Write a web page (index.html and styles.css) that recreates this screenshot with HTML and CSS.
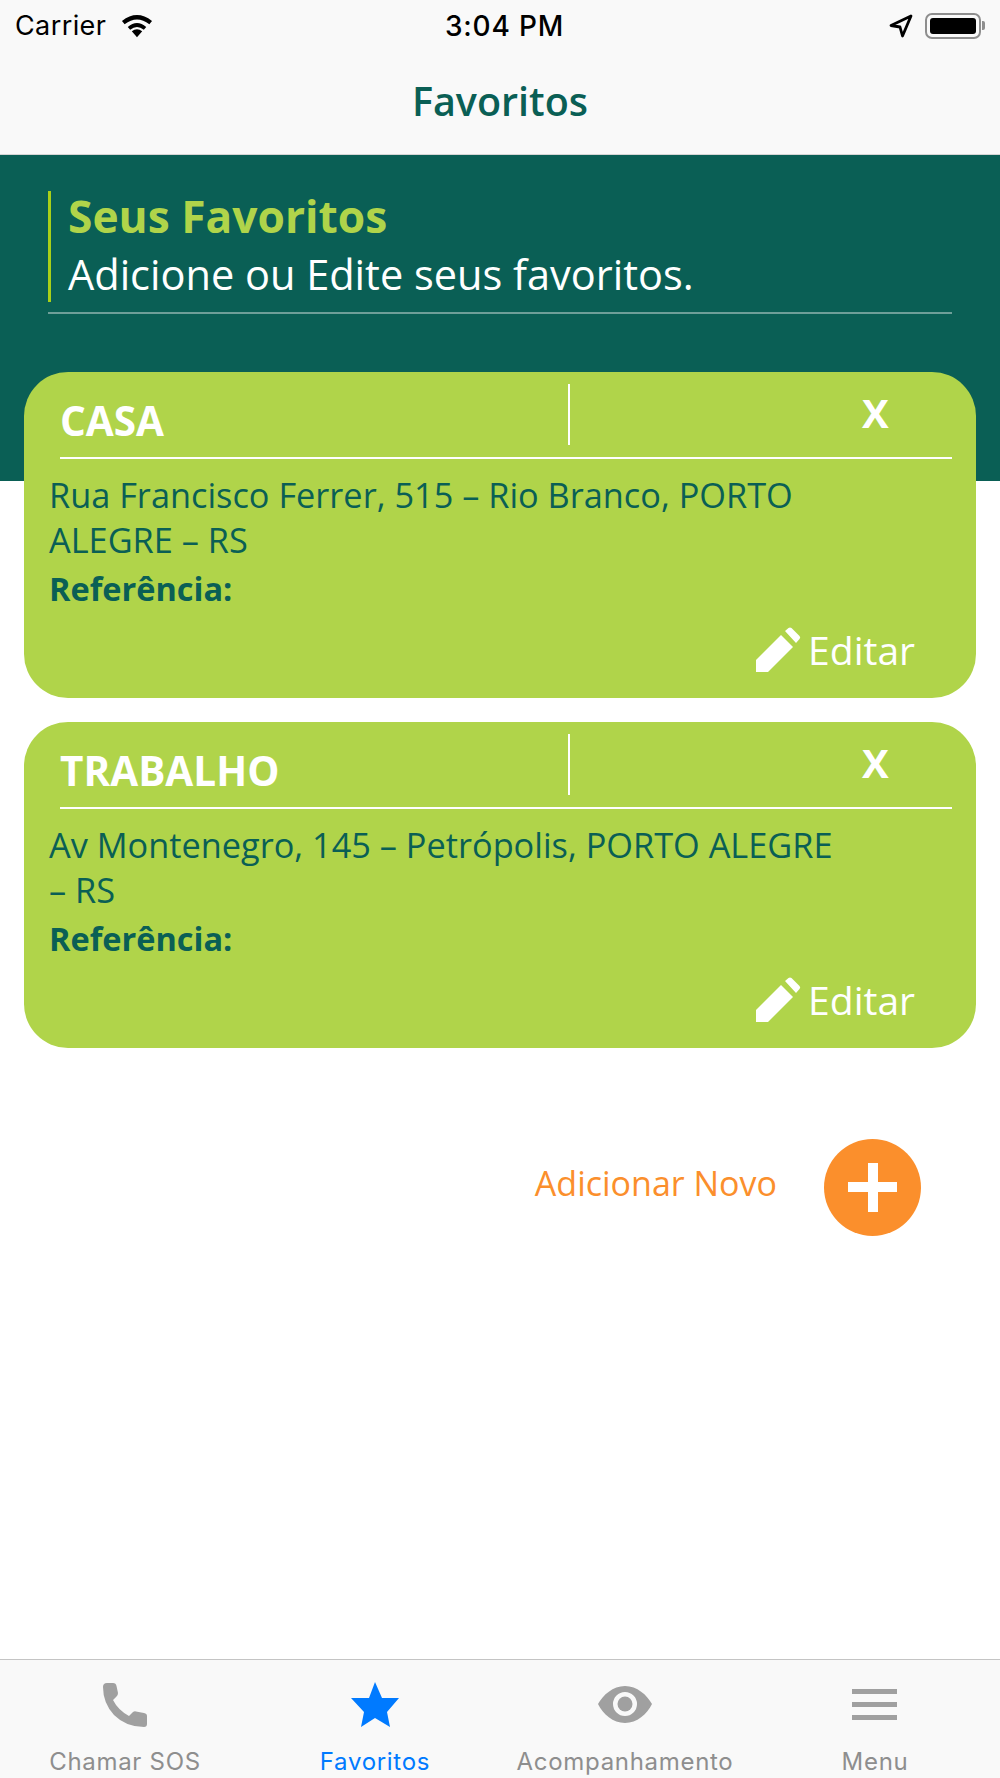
FILE: index.html
```html
<!DOCTYPE html>
<html lang="en">
<head>
  <meta charset="UTF-8" />
  <meta name="viewport" content="width=device-width, initial-scale=1" />
  <title>Favoritos</title>
  <link rel="stylesheet" href="styles.css">
</head>
<body>
  <div class="page">

    <!-- Status bar -->
    <div class="status-bar">
      <div class="status-left">
        <span>Carrier</span>
        <svg class="wifi" width="34" height="26" viewBox="0 0 36 26">
          <path d="M18 25 L12.5 18.5 Q18 14.5 23.5 18.5 Z" fill="#000"/>
          <path d="M9.5 15.5 Q18 8.5 26.500 15.5" fill="none" stroke="#000" stroke-width="4"/>
          <path d="M3.500 9.500 Q18 -2 32.500 9.500" fill="none" stroke="#000" stroke-width="4.500"/>
        </svg>
      </div>
      <div class="status-time">3:04 PM</div>
      <div class="status-right">
        <svg width="24" height="24" viewBox="0 0 24 24">
          <path d="M22 2 L2 11.500 L11 13 L13.500 22 Z" fill="none" stroke="#000" stroke-width="2.800" stroke-linejoin="round"/>
        </svg>
        <div class="battery"><div class="battery-fill"></div></div>
        <div class="battery-tip"></div>
      </div>
    </div>

    <!-- Navigation -->
    <nav class="nav-bar">Favoritos</nav>

    <!-- Header -->
    <section class="hero">
      <div class="hero-inner">
        <div class="hero-text">
          <h1>Seus Favoritos</h1>
          <p>Adicione ou Edite seus favoritos.</p>
        </div>
      </div>
    </section>

    <!-- Cards -->
    <section class="card-list">
      <div class="card">
        <div class="card-head">
          <h2>CASA</h2>
          <div class="card-close"><span>X</span></div>
        </div>
        <p class="card-address">Rua Francisco Ferrer, 515 – Rio Branco, PORTO<br>ALEGRE – RS</p>
        <p class="card-ref">Referência:</p>
        <div class="card-edit">
          <svg width="46" height="46" viewBox="0 0 46 46">
            <path d="M1 33 L26 8 L38 20 L13 45 L1 45 Z" fill="#fff"/>
            <path d="M30 4 L33.500 1 Q35 0 36.500 1 L44.500 9 Q46 10.500 44.500 12 L41 16 Z" fill="#fff"/>
          </svg>
          <span>Editar</span>
        </div>
      </div>

      <div class="card">
        <div class="card-head">
          <h2>TRABALHO</h2>
          <div class="card-close"><span>X</span></div>
        </div>
        <p class="card-address">Av Montenegro, 145 – Petrópolis, PORTO ALEGRE<br>– RS</p>
        <p class="card-ref">Referência:</p>
        <div class="card-edit">
          <svg width="46" height="46" viewBox="0 0 46 46">
            <path d="M1 33 L26 8 L38 20 L13 45 L1 45 Z" fill="#fff"/>
            <path d="M30 4 L33.500 1 Q35 0 36.500 1 L44.500 9 Q46 10.500 44.500 12 L41 16 Z" fill="#fff"/>
          </svg>
          <span>Editar</span>
        </div>
      </div>
    </section>

    <!-- Add new -->
    <div class="add-row">
      <span class="add-label">Adicionar Novo</span>
      <div class="add-btn"></div>
    </div>

    <!-- Tab bar -->
    <footer class="tab-bar">
      <div class="tab">
        <svg width="50" height="50" viewBox="0 0 50 50">
          <path d="M7 3 H13 Q16 3 16.500 6 L18 13 Q18 15 16.500 16.500 L13 20 Q18 30 29 36 L33 32 Q34.500 31 36 31.500 L44 33 Q47 33.500 47 36 V44 Q47 47 44 47 Q26 47 14 35 Q3 23 3 7 Q3 3 7 3 Z" fill="#a0a0a0"/>
        </svg>
        <span>Chamar SOS</span>
      </div>
      <div class="tab tab-active">
        <svg width="50" height="50" viewBox="0 0 50 50">
          <path d="M25 2 L32 18 L49 18 L37 32 L40 47 L25 38 L11 47 L14 32 L1 18 L19 18 Z" fill="#007aff"/>
        </svg>
        <span>Favoritos</span>
      </div>
      <div class="tab">
        <svg width="54" height="50" viewBox="0 0 54 50">
          <path fill-rule="evenodd" d="M27 6 C39 6 49 15 54 24 C49 34 39 43 27 43 C15 43 5 34 0 24 C5 15 15 6 27 6 Z M27 12 A12 12 0 1 0 27 36 A12 12 0 1 0 27 12 Z" fill="#a0a0a0"/>
          <circle cx="27" cy="24" r="7.500" fill="#a0a0a0"/>
        </svg>
        <span>Acompanhamento</span>
      </div>
      <div class="tab">
        <svg width="50" height="50" viewBox="0 0 50 50">
          <path d="M2 9 H47 V14 H2 Z M2 22 H47 V27 H2 Z M2 35 H47 V40 H2 Z" fill="#a0a0a0"/>
        </svg>
        <span>Menu</span>
      </div>
    </footer>

  </div>
</body>
</html>
```

FILE: styles.css
```css
/* Reset and base */
* {
  margin: 0;
  padding: 0;
  box-sizing: border-box;
}

body {
  background: #fff;
  font-family: 'Open Sans', 'Noto Sans', sans-serif;
}

.page {
  display: flex;
  flex-direction: column;
  width: 1000px;
  height: 1778px;
  overflow: hidden;
}

/* Status bar */
.status-bar {
  display: grid;
  grid-template-columns: 1fr auto 1fr;
  align-items: center;
  height: 50px;
  padding: 1px 15px 0;
  background: #f9f9f9;
  color: #000;
  font-family: Inter, sans-serif;
  font-size: 27px;
}

.status-left {
  display: flex;
  align-items: center;
  gap: 14px;
}

.status-left span {
  letter-spacing: 0.4px;
}

.status-time {
  padding-left: 9px;
  font-size: 28px;
  font-weight: 500;
  letter-spacing: 0.8px;
}

.status-right {
  display: flex;
  align-items: center;
  justify-content: flex-end;
  gap: 12px;
}

.battery {
  width: 56px;
  height: 26px;
  padding: 3px;
  border: 2px solid #8e8e8e;
  border-radius: 7px;
}

.battery-fill {
  height: 100%;
  background: #000;
  border-radius: 3px;
}

.battery-tip {
  width: 3px;
  height: 9px;
  margin-left: -11px;
  background: #8e8e8e;
  border-radius: 0 2px 2px 0;
}

/* Nav bar */
.nav-bar {
  height: 105px;
  padding-top: 27px;
  background: #f9f9f9;
  border-bottom: 1px solid #d5d5d5;
  text-align: center;
  color: #0a5f55;
  font-size: 39.5px;
  font-weight: 600;
  line-height: 48px;
}

/* Green header */
.hero {
  height: 326px;
  padding: 36px 48px 0;
  background: #0a5f55;
}

.hero-inner {
  padding-bottom: 10px;
  border-bottom: 2px solid #6f9f99;
}

.hero-text {
  height: 111px;
  padding-left: 17px;
  border-left: 3px solid #a9d018;
}

.hero-text h1 {
  color: #b0d44a;
  font-size: 44.300px;
  font-weight: 700;
  line-height: 50px;
}

.hero-text p {
  margin-top: 6px;
  color: #fff;
  font-size: 41.5px;
  line-height: 54px;
}

/* Cards */
.card-list {
  display: flex;
  flex-direction: column;
  gap: 24px;
  margin: -109px 24px 0;
}

.card {
  height: 326px;
  padding: 12px 24px 0 25px;
  background: #b0d44a;
  border-radius: 44px;
  color: #0a5f55;
}

.card-head {
  display: flex;
  height: 75px;
  margin-left: 11px;
  border-bottom: 2px solid #fff;
}

.card-head h2 {
  width: 510px;
  height: 61px;
  padding-top: 13px;
  border-right: 2px solid #fff;
  color: #fff;
  font-size: 40.5px;
  font-weight: 700;
  line-height: 48px;
  white-space: nowrap;
}

.card-close {
  flex: 1;
  padding-left: 292px;
  color: #fff;
  font-size: 40px;
  font-weight: 700;
  line-height: 58px;
}

.card-address {
  margin-top: 13px;
  font-size: 34.300px;
  line-height: 45px;
}

.card-ref {
  margin-top: 6px;
  font-size: 32.5px;
  font-weight: 700;
  line-height: 42px;
}

.card-edit {
  display: flex;
  align-items: center;
  justify-content: flex-end;
  gap: 7px;
  margin-top: 16px;
  padding-right: 37px;
  color: #fff;
  font-size: 39px;
  line-height: 48px;
}

/* Add new */
.add-row {
  display: flex;
  align-items: center;
  justify-content: flex-end;
  gap: 47px;
  margin-top: 91px;
  padding-right: 79px;
  color: #fb8f2c;
  font-size: 34px;
}

.add-label {
  padding-bottom: 10px;
}

.add-btn {
  position: relative;
  width: 97px;
  height: 97px;
  background: #fb8f2c;
  border-radius: 50%;
}

/* plus sign */
.add-btn::before,
.add-btn::after {
  content: "";
  position: absolute;
  background: #fff;
}

.add-btn::before {
  left: 24px;
  top: 43px;
  width: 49px;
  height: 10px;
}

.add-btn::after {
  left: 44px;
  top: 24px;
  width: 10px;
  height: 49px;
}

/* Tab bar */
.tab-bar {
  display: grid;
  grid-template-columns: repeat(4, 1fr);
  height: 119px;
  margin-top: auto;
  padding-top: 20px;
  background: #f9f9f9;
  border-top: 1px solid #c4c4c4;
}

.tab {
  display: flex;
  flex-direction: column;
  align-items: center;
  gap: 18px;
  color: #8e8e8e;
  font-family: Inter, sans-serif;
  font-size: 24px;
  letter-spacing: 0.7px;
  line-height: 28px;
  white-space: nowrap;
}

.tab-active {
  color: #007aff;
}
```
